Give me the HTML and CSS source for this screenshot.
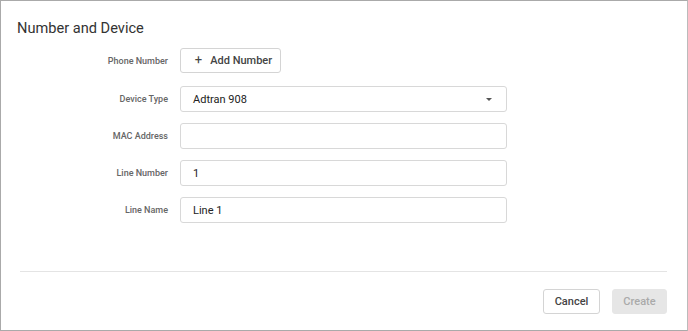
FILE: index.html
```html
<!DOCTYPE html>
<html>
<head>
<meta charset="utf-8">
<link rel="stylesheet" href="styles.css">
</head>
<body>
<div class="frame">
  <h1 class="title">Number and Device</h1>
  <div class="form">
    <div class="row first">
      <label class="label">Phone Number</label>
      <button class="btn add"><span class="plus">+</span>Add Number</button>
    </div>
    <div class="row">
      <label class="label">Device Type</label>
      <div class="field select"><span>Adtran 908</span><span class="caret"></span></div>
    </div>
    <div class="row">
      <label class="label">MAC Address</label>
      <div class="field"></div>
    </div>
    <div class="row">
      <label class="label">Line Number</label>
      <div class="field"><span>1</span></div>
    </div>
    <div class="row">
      <label class="label">Line Name</label>
      <div class="field"><span>Line 1</span></div>
    </div>
  </div>
  <div class="divider"></div>
  <div class="footer">
    <button class="btn cancel">Cancel</button>
    <button class="btn create">Create</button>
  </div>
</div>
</body>
</html>
```
FILE: styles.css
```css
* { box-sizing: border-box; }
html, body { margin: 0; padding: 0; background: #fff; }
body { font-family: Roboto, "Liberation Sans", sans-serif; color: #333; }
.frame {
  width: 688px;
  height: 331px;
  border: 1px solid #aaa;
  border-right-color: #bbb;
  display: flex;
  flex-direction: column;
}
.title {
  margin: 0;
  padding: 18px 0 0 16px;
  font-size: 14.6px;
  font-weight: 400;
  line-height: 19px;
  color: #333;
}
.form {
  display: flex;
  flex-direction: column;
  gap: 11px;
  margin-top: 10px;
}
.row {
  display: flex;
  align-items: center;
  gap: 12px;
  height: 26px;
}
.row.first {
  height: 25px;
  margin-bottom: 2px;
}
.label {
  width: 167px;
  text-align: right;
  font-size: 9px;
  font-weight: 500;
  color: #666;
}
.btn {
  font-family: Roboto, "Liberation Sans", sans-serif;
  font-size: 11px;
  font-weight: 500;
  height: 25px;
  border: 1px solid #d4d4d4;
  border-radius: 3px;
  background: #fff;
  color: #444;
  padding: 0;
  cursor: pointer;
}
.add {
  width: 101px;
  display: flex;
  align-items: center;
  justify-content: center;
  gap: 8px;
  padding-left: 6px;
}
.plus { font-size: 13px; font-weight: 400; line-height: 1; margin-top: -2px; }
.field {
  width: 327px;
  height: 26px;
  border: 1px solid #d8d8d8;
  border-radius: 3px;
  display: flex;
  align-items: center;
  justify-content: space-between;
  padding: 0 14px 0 12px;
  font-size: 11px;
  color: #222;
}
.caret {
  width: 0;
  height: 0;
  border-left: 3px solid transparent;
  border-right: 3px solid transparent;
  border-top: 3px solid #555;
}
.divider {
  margin: 48px 20px 0 19px;
  height: 1px;
  background: #e4e4e4;
}
.footer {
  display: flex;
  justify-content: flex-end;
  gap: 12px;
  padding: 17px 20px 0 0;
}
.cancel { width: 57px; }
.create {
  width: 55px;
  background: #e6e6e6;
  border-color: #e6e6e6;
  color: #aaa;
}
```
